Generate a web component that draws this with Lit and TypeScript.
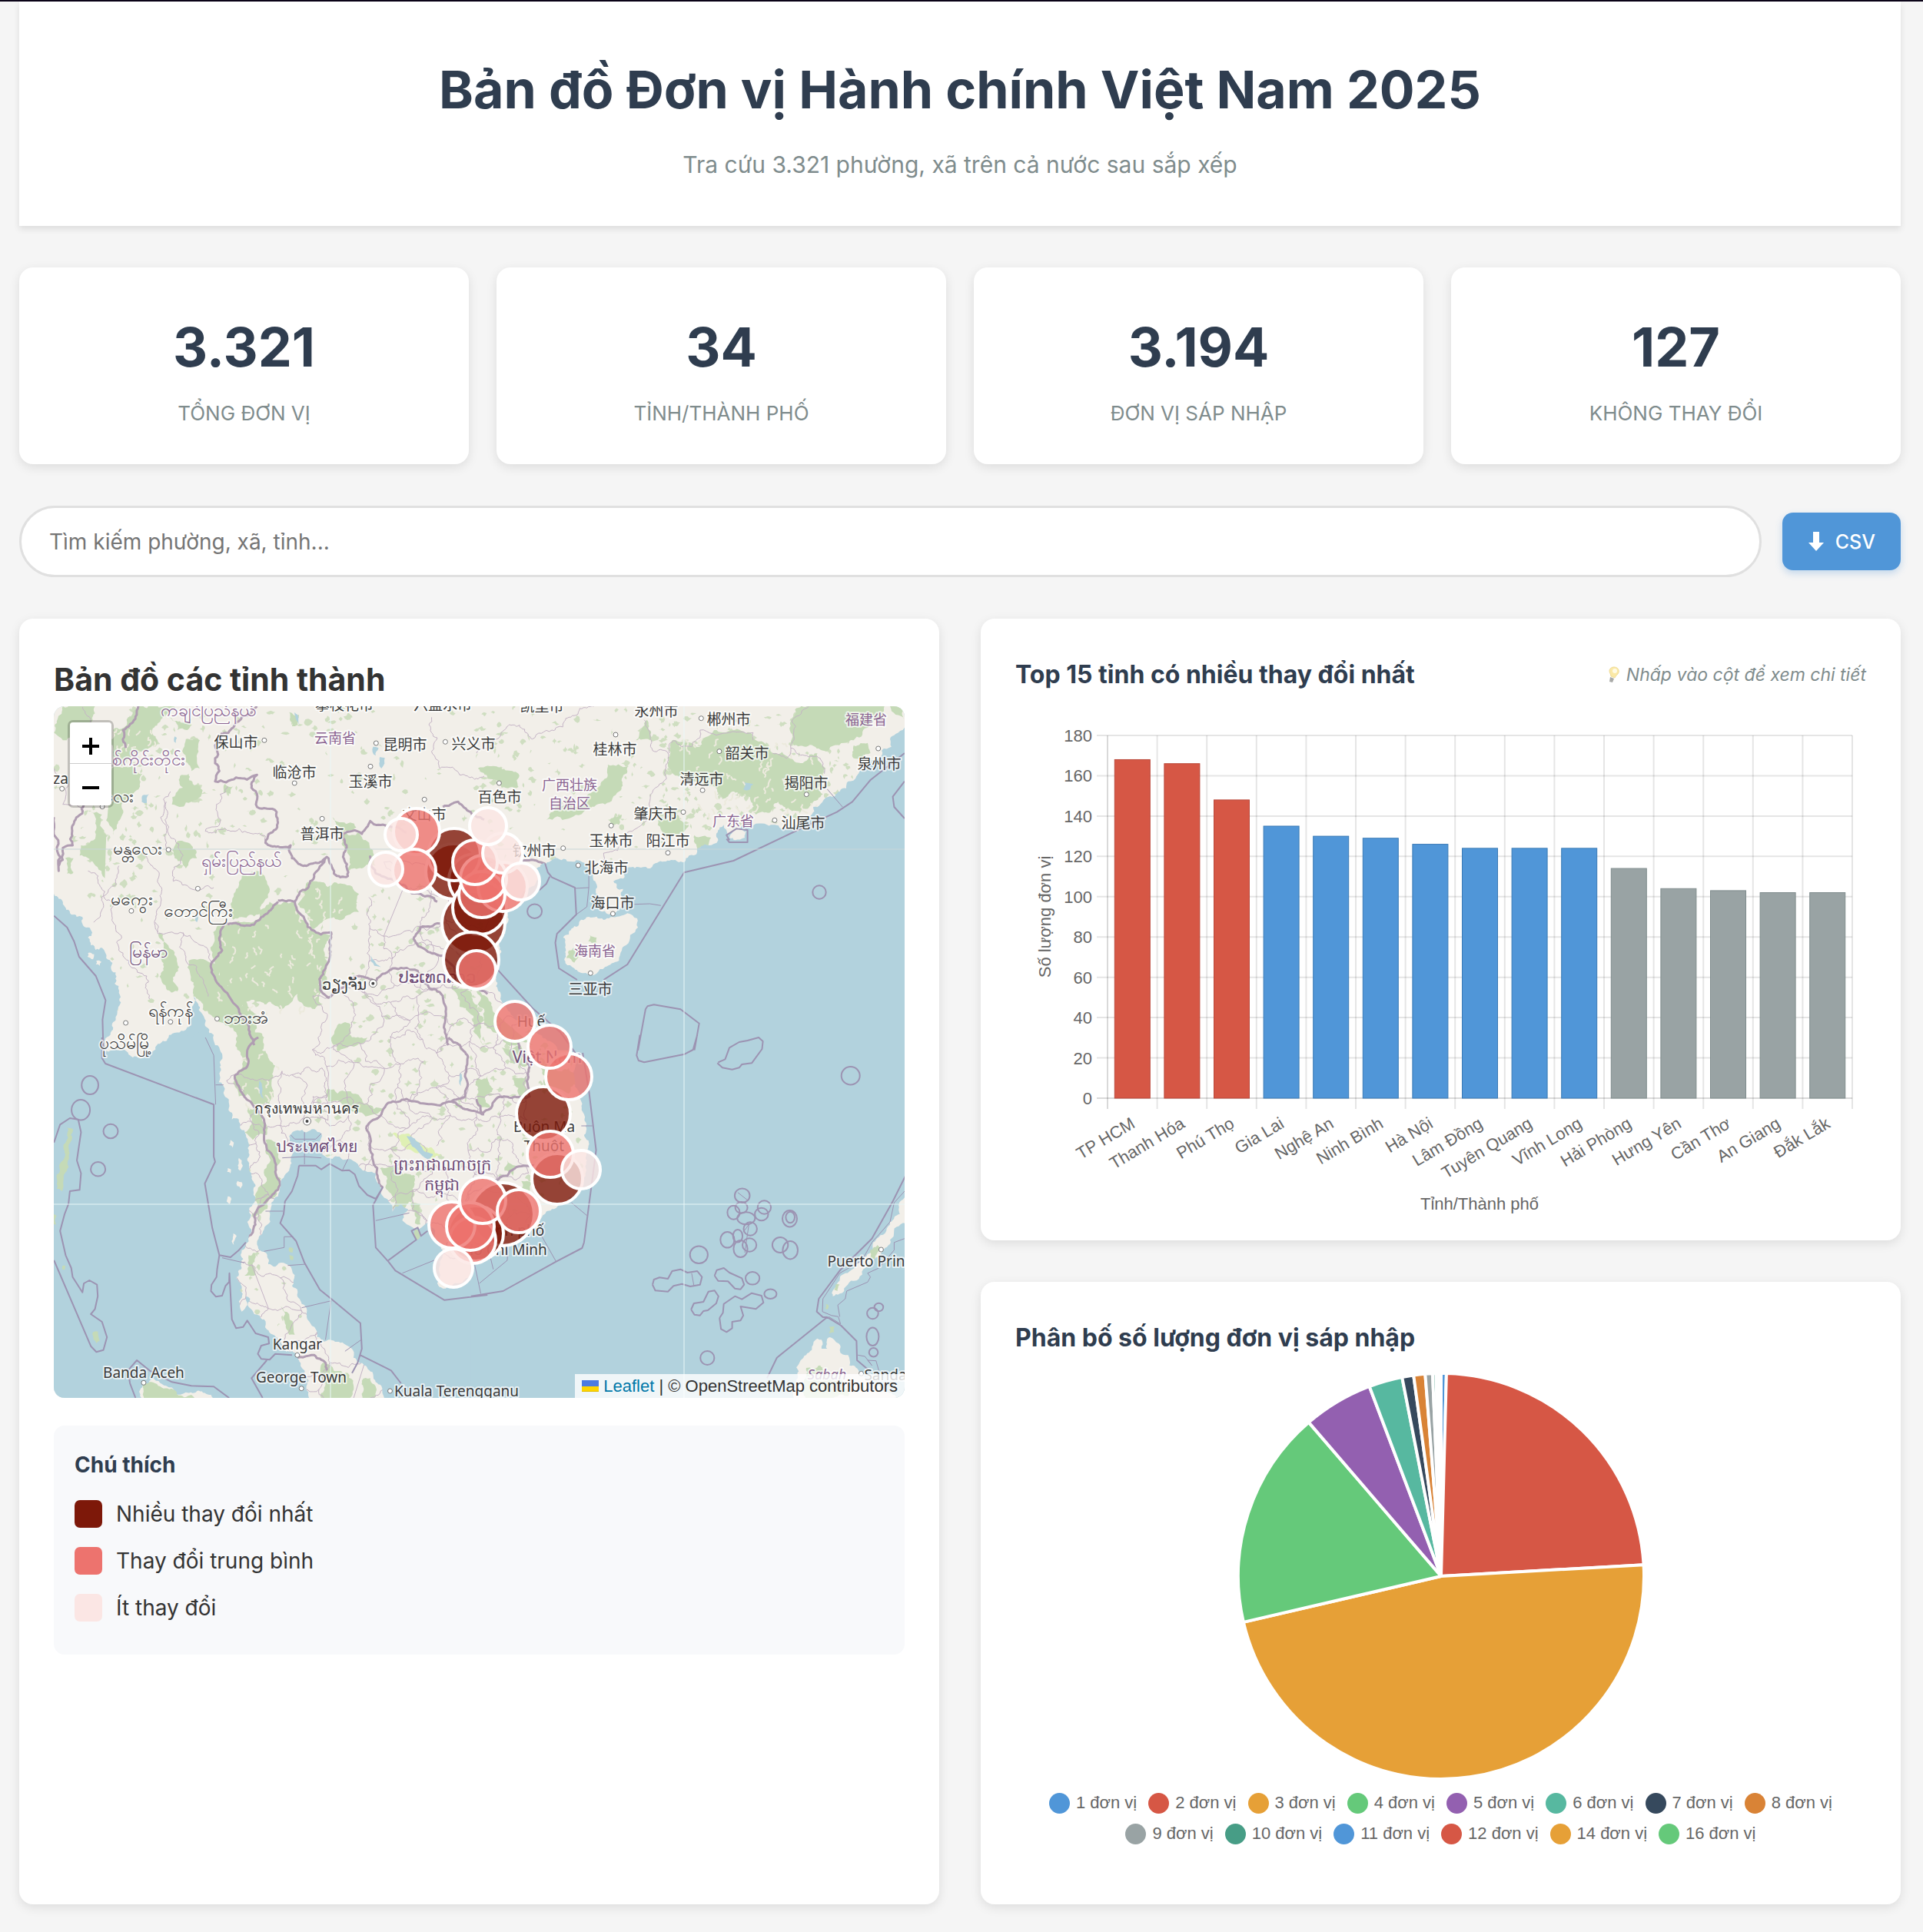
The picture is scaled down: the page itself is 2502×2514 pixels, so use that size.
import { LitElement, html, svg, css } from "lit";
import { customElement } from "lit/decorators.js";

type Pt = [number, number];

/* ---------- data ---------- */

const STATS = [
  ["3.321", "Tổng đơn vị"],
  ["34", "Tỉnh/Thành phố"],
  ["3.194", "Đơn vị sáp nhập"],
  ["127", "Không thay đổi"],
];

const RED = "#d65745";
const BLUE = "#5096d8";
const GREY = "#99a3a4";

const BARS: [string, number][] = [
  ["TP HCM", 168], ["Thanh Hóa", 166], ["Phú Thọ", 148], ["Gia Lai", 135],
  ["Nghệ An", 130], ["Ninh Bình", 129], ["Hà Nội", 126], ["Lâm Đồng", 124],
  ["Tuyên Quang", 124], ["Vĩnh Long", 124], ["Hải Phòng", 114],
  ["Hưng Yên", 104], ["Cần Thơ", 103], ["An Giang", 102], ["Đắk Lắk", 102],
];

/* label, colour, end angle in degrees clockwise from the top */
const SLICES: [string, string, number][] = [
  ["1 đơn vị", BLUE, 1.5],
  ["2 đơn vị", RED, 86.8],
  ["3 đơn vị", "#e6a037", 256.9],
  ["4 đơn vị", "#65c97a", 319.3],
  ["5 đơn vị", "#9360b0", 339.3],
  ["6 đơn vị", "#57b8a0", 348.9],
  ["7 đơn vị", "#36495d", 352.2],
  ["8 đơn vị", "#d98336", 355.5],
  ["9 đơn vị", GREY, 357.6],
  ["10 đơn vị", "#479d86", 358.6],
  ["11 đơn vị", BLUE, 359],
  ["12 đơn vị", RED, 359.4],
  ["14 đơn vị", "#e6a037", 359.7],
  ["16 đơn vị", "#65c97a", 360],
];

const HIGH = "#7d1809";
const MID = "#ed736e";
const LOW = "#fbe6e4";

/* x, y, radius, level */
const MARKERS: [number, number, number, string][] = [
  [520, 215, 36, HIGH], [548, 226, 34, HIGH], [521, 193, 34, HIGH],
  [546, 282, 41, HIGH], [554, 262, 35, HIGH], [543, 330, 36, HIGH],
  [550, 343, 25, MID],
  [472, 163, 30, MID], [452, 167, 21, LOW], [469, 214, 28, MID], [432, 212, 22, LOW],
  [584, 235, 32, MID], [557, 245, 30, MID], [559, 224, 30, MID], [548, 203, 29, MID],
  [584, 191, 26, LOW], [565, 156, 24, LOW], [608, 228, 24, LOW],
  [600, 410, 26, MID], [655, 615, 33, HIGH], [637, 530, 35, HIGH],
  [670, 482, 30, MID], [645, 443, 28, MID], [646, 583, 30, MID], [686, 603, 25, LOW],
  [584, 661, 41, HIGH], [549, 686, 36, HIGH], [545, 695, 30, MID],
  [518, 675, 30, MID], [542, 677, 31, MID], [558, 643, 30, MID],
  [605, 657, 28, MID], [520, 731, 25, LOW],
];

/* ---------- map geometry ---------- */

/* The base map is digitised in four sheets; each has its own origin. */
type Sheet = "nw" | "ne" | "sw" | "se";
const ORIGIN: Record<Sheet, Pt> = { nw: [-10, -19], ne: [550, -19], sw: [-10, 431], se: [550, 431] };
const SX = 1 / 2.751;
const SY = 1 / 3;
const at = (s: Sheet, x: number, y: number): Pt => [ORIGIN[s][0] + x * SX, ORIGIN[s][1] + y * SY];

const parse = (s: Sheet, text: string): Pt[] =>
  text.trim().split(/\s+/).map((p) => {
    const [x, y] = p.split(",").map(Number);
    return at(s, x, y);
  });

let seed = 7;
const rnd = () => {
  seed = (seed * 16807) % 2147483647;
  return seed / 2147483647 - 0.5;
};

/* Midpoint displacement, so borders and coasts look surveyed.
   Segments longer than the limit are sheet edges and stay straight. */
const rough = (pts: Pt[], amount: number, limit = 60): Pt[] => {
  let out = pts;
  for (let pass = 0; pass < 4; pass++) {
    const next: Pt[] = [out[0]];
    for (let i = 1; i < out.length; i++) {
      const [ax, ay] = out[i - 1];
      const [bx, by] = out[i];
      const len = Math.hypot(bx - ax, by - ay);
      if (len > 4 && len < limit) {
        const k = rnd() * amount * len;
        next.push([(ax + bx) / 2 - ((by - ay) / len) * k, (ay + by) / 2 + ((bx - ax) / len) * k]);
      }
      next.push(out[i]);
    }
    out = next;
  }
  return out;
};

const path = (pts: Pt[], close = false) =>
  "M" + pts.map(([x, y]) => `${x.toFixed(1)} ${y.toFixed(1)}`).join("L") + (close ? "Z" : "");

const area = (s: Sheet, text: string, amount = 0.45) => {
  const p = parse(s, text);
  return path(rough([...p, p[0]], amount), true);
};
const line = (s: Sheet, text: string, amount = 0) =>
  path(amount ? rough(parse(s, text), amount, 90) : parse(s, text));

const FOREST = [
  area("nw", "60,57 175,57 175,85 150,130 110,180 60,190 28,160 40,110"),
  area("nw", "330,57 450,57 410,110 380,150 400,200 330,230 270,290 240,250 240,150 290,120"),
  area("nw", "440,95 520,105 505,150 470,150"),
  area("nw", "500,185 550,190 540,260 550,300 520,310 500,260"),
  area("nw", "485,325 510,320 530,365 560,385 520,430 450,440 470,390 490,375"),
  area("nw", "160,470 200,480 215,560 210,740 170,670 120,640 125,600 155,590"),
  area("nw", "235,300 310,290 345,320 310,400 270,450 240,560 220,480"),
  area("nw", "68,650 98,650 98,705 75,710"),
  area("nw", "465,590 520,600 540,650 500,690 460,650"),
  area("nw", "700,720 750,700 790,740 780,820 760,870 700,880 670,890 660,850 680,770"),
  area("nw", "930,750 960,740 1060,750 1120,790 1120,860 1060,890 1000,890 950,930 900,830"),
  area("nw", "800,820 890,820 930,900 950,930 1020,950 1010,1060 980,1180 990,1220 930,1230 900,1180 840,1240 760,1210 700,1230 650,1160 600,1080 610,920 700,900 765,885"),
  area("nw", "1070,550 1120,550 1170,620 1180,680 1130,690 1080,700 1060,600"),
  area("nw", "590,1060 650,1150 740,1250 760,1380 700,1380 680,1330 560,1240 530,1150 510,1050"),
  area("nw", "405,940 440,1000 470,1060 470,1170 430,1160 420,1060"),
  area("nw", "1025,490 1060,510 1110,530 1060,550"),
  area("nw", "640,360 670,370 660,400 635,395"),
  area("nw", "870,80 905,90 900,130 880,135"),
  area("nw", "1040,1310 1090,1300 1100,1380 1030,1380"),
  area("nw", "1450,1150 1500,1160 1568,1240 1568,1380 1530,1300 1480,1230"),
  area("ne", "5,300 60,290 150,320 150,372 90,375 40,340"),
  area("ne", "470,285 545,290 520,340 510,390 460,440 400,460 250,500 260,480 380,440 440,370"),
  area("ne", "610,110 625,160 620,190 570,190 590,150"),
  area("ne", "700,190 800,215 850,150 980,160 1000,190 1060,240 1120,260 1220,240 1250,300 1230,340 1240,400 1200,440 1120,460 1080,430 1000,480 960,400 880,420 780,350 690,300"),
  area("ne", "1140,70 1190,57 1460,57 1440,110 1350,190 1280,210 1180,215 1125,200"),
  area("ne", "1350,210 1400,200 1410,240 1350,260"),
  area("ne", "1480,57 1532,57 1532,110 1500,90"),
  area("ne", "650,500 720,480 760,520 720,560 680,570"),
  area("ne", "470,500 520,480 510,520 480,530"),
  area("ne", "780,560 840,570 830,600 790,620"),
  area("ne", "60,1250 0,1170 0,1240 60,1330 130,1380 200,1380"),
  area("sw", "680,0 780,0 800,90 820,110 810,200 800,260 740,260 720,220 690,230 670,180 700,120"),
  area("sw", "715,255 770,290 790,380 740,400 710,370"),
  area("sw", "785,400 825,410 840,480 840,580 800,630 760,690 735,700 750,610 790,560"),
  area("sw", "725,850 745,840 745,930 710,930"),
  area("sw", "1040,0 1150,0 1120,25 1040,50"),
  area("sw", "1010,200 1080,210 1140,260 1210,280 1180,300 1110,290 1060,260 1010,250"),
  area("sw", "1195,510 1250,500 1320,540 1310,640 1240,670 1215,580"),
  area("sw", "1310,640 1340,650 1340,730 1320,725"),
  area("sw", "840,1050 870,1080 890,1160 870,1160 850,1100"),
  area("sw", "990,1270 1080,1310 1080,1440 970,1440 1000,1350"),
  area("sw", "1130,1340 1160,1330 1190,1440 1120,1440"),
  area("se", "0,160 40,150 60,200 30,240 60,280 0,260"),
  area("se", "130,160 180,150 190,220 150,240"),
  area("se", "110,480 140,500 130,540 100,520"),
  area("se", "160,560 200,570 190,600 150,610"),
  area("se", "230,100 330,120 360,180 330,220 250,200"),
  area("se", "90,40 150,30 180,110 120,100"),
];

const SEAS = [
  area("nw", "-60,740 28,790 60,830 90,870 130,880 150,920 165,940 150,960 160,990 200,1000 215,1040 235,1090 245,1140 262,1200 255,1250 240,1290 225,1345 215,1400 -60,1400", 0.6),
  area("nw", "528,1185 545,1220 560,1260 575,1310 605,1390 400,1390 440,1350 500,1320 515,1280 522,1230", 0.5),
  area("ne", "1700,100 1532,140 1500,165 1480,185 1485,215 1450,230 1440,260 1400,290 1360,330 1330,350 1300,390 1260,410 1230,440 1205,450 1200,480 1150,520 1090,535 1040,520 1000,515 985,530 960,520 940,545 900,560 885,520 870,530 865,580 830,600 790,625 760,640 745,665 690,660 640,670 580,685 530,700 525,730 490,740 525,770 520,800 530,830 505,850 440,855 435,800 425,740 430,690 400,690 370,660 320,655 290,650 260,665 215,690 230,720 200,760 150,830 110,860 100,910 85,970 60,1050 60,1100 70,1150 85,1200 120,1250 180,1290 230,1340 290,1400 1700,1400", 0.5),
  area("sw", "-60,-10 215,-10 210,55 260,50 300,70 345,80 375,60 400,25 440,-10 600,-10 605,30 625,90 620,140 640,200 655,260 665,320 690,320 715,380 725,450 720,480 735,530 750,580 740,650 720,720 725,780 700,830 700,900 680,940 690,1030 700,1070 715,1010 730,1020 745,1080 780,1100 790,1140 830,1180 890,1230 905,1260 925,1300 940,1340 970,1450 -60,1450", 0.5),
  area("sw", "870,385 900,362 960,358 985,375 975,410 985,440 1000,465 1050,465 1090,475 1120,505 1150,525 1180,530 1200,590 1225,640 1240,680 1270,650 1295,670 1275,715 1310,740 1370,720 1390,780 1420,830 1410,890 1400,960 1430,980 1470,960 1530,900 1640,860 1640,1500 1260,1500 1200,1360 1140,1280 1100,1250 1060,1190 1010,1180 970,1170 935,1100 915,1040 900,990 880,970 870,890 850,880 820,895 795,885 785,840 765,830 755,800 780,750 800,680 830,620 840,580 870,520 880,460 875,420", 0.4),
  area("se", "290,-20 330,60 350,150 370,230 380,290 385,380 400,430 395,480 390,540 370,600 320,640 270,670 235,700 225,740 190,760 130,800 90,830 50,850 -20,880 -20,1500 1700,1500 1700,-20", 0.4),
];

const LAKES = [
  area("sw", "1290,385 1320,395 1350,440 1385,455 1370,475 1340,455 1310,425", 0.3),
  area("sw", "765,160 775,200 778,240 766,220", 0.3),
  area("sw", "1480,130 1490,160 1485,190 1478,170", 0.3),
  area("nw", "345,405 368,400 360,435 342,430", 0.3),
  area("nw", "1170,215 1190,220 1180,250 1168,235", 0.3),
  area("nw", "890,80 900,90 908,130 895,110", 0.3),
  area("nw", "1195,255 1212,258 1200,300 1192,280", 0.3),
  area("nw", "460,175 468,180 464,200 458,195", 0.3),
  area("nw", "1160,1030 1180,1060 1200,1075 1175,1070", 0.3),
  area("nw", "535,870 545,880 540,900 533,890", 0.3),
  area("ne", "960,355 990,360 980,380 955,380", 0.4),
];

const ISLANDS = [
  area("ne", "540,865 575,885 578,920 550,950 535,990 520,1010 510,1050 460,1075 430,1100 390,1098 350,1080 318,1060 320,1010 310,960 340,925 375,890 430,878 480,880"),
  area("ne", "905,570 935,540 968,545 960,570 925,580"),
  area("se", "1580,590 1532,625 1515,690 1480,720 1440,780 1420,830 1370,880 1320,920 1290,970 1275,1010 1300,1000 1350,950 1400,890 1450,840 1480,790 1580,700"),
  area("se", "1150,1320 1160,1260 1200,1220 1220,1175 1235,1180 1235,1215 1255,1215 1265,1170 1280,1180 1300,1220 1330,1240 1335,1280 1370,1310 1430,1350 1500,1400 1510,1450 1140,1450"),
  area("sw", "345,1450 345,1360 370,1340 430,1360 500,1385 590,1395 630,1450"),
  area("sw", "660,400 672,410 668,430 655,420"),
  area("sw", "650,510 662,515 660,530 648,525"),
  area("sw", "690,470 700,480 696,520 686,500"),
  area("sw", "685,560 700,565 696,590 684,580"),
  area("sw", "670,765 682,775 672,810 664,795"),
  area("nw", "150,1020 172,1025 168,1045 148,1035"),
  area("nw", "180,1050 198,1055 192,1070 178,1065"),
  area("sw", "650,620 662,626 656,650 646,640"),
  area("sw", "1405,960 1425,965 1420,978 1408,974"),
];

const ISLAND_FOREST = [
  area("ne", "330,1010 350,1000 365,1035 350,1058 322,1040"),
  area("ne", "405,950 430,960 425,985 400,975"),
  area("sw", "75,350 97,360 92,400 80,420 82,470 75,520 62,560 58,600 38,590 50,520 60,480 62,430"),
  area("sw", "168,1150 186,1148 192,1185 180,1195 170,1180"),
  area("sw", "28,690 38,695 36,730 28,730"),
  area("sw", "58,892 70,892 68,906 58,906"),
  area("sw", "345,1360 370,1345 420,1370 520,1395 560,1450 350,1450"),
  area("sw", "1320,750 1335,755 1330,790 1322,785"),
  area("sw", "870,820 885,825 882,840 872,838"),
  area("sw", "870,850 885,855 882,870 872,866"),
  area("se", "1410,830 1435,810 1450,825 1425,865 1408,860"),
  area("se", "1262,1130 1282,1128 1280,1150 1262,1155"),
  area("se", "1250,1040 1260,1045 1256,1062 1248,1058"),
  area("se", "1285,965 1300,965 1292,990 1280,985"),
  area("se", "1180,1290 1230,1280 1260,1310 1300,1300 1330,1400 1180,1420"),
];

const BORDERS = [
  line("nw", "755,57 700,100 670,140 605,210 605,280 620,310 605,350 755,325 735,375 755,450 825,470 785,590 875,600 880,650 920,680 1005,645 1030,710 1080,720 1075,600 1060,555 1130,555 1160,505 1220,530 1290,550", 0.35),
  line("nw", "830,815 890,820 940,755 1000,650", 0.35),
  line("nw", "830,820 765,890 665,905 640,905 630,1010 590,1065 640,1170 690,1240 725,1320 745,1380", 0.35),
  line("nw", "890,820 930,900 950,930 1020,940 1015,1040 1000,1080 985,1170 1010,1195 1070,1150 1120,1110 1180,1130 1250,1080 1330,1090 1400,1170 1425,1300 1440,1380", 0.35),
  line("nw", "1580,1180 1420,1030 1315,965 1340,920 1410,905", 0.3),
  line("nw", "1160,640 1200,720 1260,750 1300,780 1340,790 1400,820", 0.4),
  line("nw", "28,490 45,700 60,610 95,600 105,500 135,440", 0.35),
  line("nw", "330,57 310,120 275,150 285,220", 0.35),
  line("nw", "1420,450 1475,430 1520,470 1568,500", 0.35),
  line("ne", "165,660 215,660 245,672", 0.2),
  line("sw", "760,0 720,50 715,120 675,150 690,190 750,275 780,320 780,400 815,470 838,575 745,700 740,760 715,800", 0.25),
  line("sw", "1145,350 1200,300 1225,255 1290,240 1450,250 1500,230 1510,75 1440,0", 0.25),
  line("sw", "1145,350 1160,440 1185,510 1205,585", 0.3),
  line("sw", "1450,250 1568,300", 0.3),
  line("sw", "880,1240 960,1240 1000,1270 1005,1300", 0.35),
  line("se", "0,240 20,300 70,240 100,230 190,230 190,110 150,20", 0.3),
  line("se", "60,560 110,540 170,500 210,500", 0.3),
];

const PROVINCES = [
  line("nw", "430,430 425,500 440,560 490,640 455,740 520,770 600,765", 0.5),
  line("nw", "445,390 420,420 425,560 430,620", 0.4),
  line("nw", "650,370 610,440 620,520 570,545 660,545 720,550 790,590", 0.5),
  line("nw", "390,900 400,945 480,940 540,980 600,1060", 0.4),
  line("nw", "490,940 500,1050 560,1120 580,1190", 0.4),
  line("nw", "150,700 210,780 240,900 260,1010 300,1070 360,1110 370,1200", 0.5),
  line("nw", "340,630 400,700 410,830 400,940", 0.4),
  line("nw", "260,680 200,800 170,900", 0.4),
  line("nw", "1380,100 1370,130 1400,180 1390,250 1410,300 1460,300 1480,325 1568,330", 0.5),
  line("ne", "0,240 60,190 130,130 200,185 270,150 330,100 420,57", 0.5),
  line("ne", "600,110 630,230 685,240 680,340 650,370 620,450 600,510 540,550 505,620 455,630 455,660", 0.4),
  line("ne", "690,240 705,190 770,215 800,180 800,150 990,160 990,190", 0.4),
  line("ne", "1190,57 1130,110 1125,220 1230,260 1245,320", 0.4),
  line("ne", "1060,240 1110,260 1125,220", 0.4),
  line("nw", "130,60 180,150 170,240 240,290", 0.4),
  line("nw", "30,300 80,360 60,440 130,470", 0.4),
];

/* A jittered lattice stands for the small provinces of the peninsula. */
const lattice = (x0: number, y0: number, x1: number, y1: number, step: number) => {
  const cols = Math.round((x1 - x0) / step);
  const rows = Math.round((y1 - y0) / step);
  const node: Pt[][] = [];
  for (let r = 0; r <= rows; r++) {
    node.push([]);
    for (let c = 0; c <= cols; c++) {
      node[r].push([x0 + c * step + rnd() * step * 0.7 + (r % 2) * step * 0.4, y0 + r * step + rnd() * step * 0.7]);
    }
  }
  const out: string[] = [];
  for (let r = 0; r <= rows; r++) {
    for (let c = 0; c <= cols; c++) {
      if (c < cols && rnd() < 0.36) out.push(path(rough([node[r][c], node[r][c + 1]], 0.5)));
      if (r < rows && rnd() < 0.36) out.push(path(rough([node[r][c], node[r + 1][c]], 0.5)));
    }
  }
  return out.join("");
};
const LATTICE =
  lattice(340, 375, 620, 690, 33) + lattice(225, 480, 340, 690, 32) +
  lattice(400, 210, 560, 370, 38) + lattice(225, 740, 420, 900, 40);

/* Small patches of woodland across the mainland. */
const patches = (() => {
  const out: string[] = [];
  const zones: [number, number, number, number, number][] = [
    [0, 0, 560, 180, 150], [560, 0, 800, 200, 110], [790, 10, 1040, 160, 240],
    [60, 120, 360, 400, 110], [340, 420, 640, 660, 120], [210, 560, 330, 860, 60], [380, 230, 560, 420, 90],
    [40, 60, 120, 260, 60], [560, 420, 690, 640, 60],
  ];
  for (const [x0, y0, x1, y1, n] of zones) {
    for (let i = 0; i < n; i++) {
      const x = x0 + (rnd() + 0.5) * (x1 - x0);
      const y = y0 + (rnd() + 0.5) * (y1 - y0);
      const a = 1 + (rnd() + 0.5) * 5;
      const b = 1 + (rnd() + 0.5) * 4;
      const p: Pt[] = [[x - a, y], [x, y - b], [x + a, y + rnd() * 3], [x + rnd() * 3, y + b]];
      out.push(path(rough([...p, p[0]], 0.6), true));
    }
  }
  return out.join("");
})();

/* River valleys cut through the forest. */
const valleys = (() => {
  const out: string[] = [];
  const zones: [number, number, number, number, number][] = [
    [210, 285, 360, 400, 46], [80, 10, 140, 80, 16], [810, 40, 1000, 140, 50], [240, 440, 290, 520, 12], [305, 235, 390, 280, 14],
  ];
  for (const [x0, y0, x1, y1, n] of zones) {
    for (let i = 0; i < n; i++) {
      const x = x0 + (rnd() + 0.5) * (x1 - x0);
      const y = y0 + (rnd() + 0.5) * (y1 - y0);
      out.push(path(rough([[x, y], [x + rnd() * 14, y + 8 + rnd() * 8]], 0.7)));
    }
  }
  return out.join("");
})();

const SEA_LINES = [
  line("nw", "28,875 75,920 100,975 118,1035 178,1110 213,1205 202,1280 205,1400"),
  line("sw", "200,0 200,80 212,102 600,262 600,465 605,485 568,570 595,745 620,850 660,858 690,830 715,800"),
  line("sw", "620,850 612,905 610,935 592,965 590,990 608,1012 630,1008 642,970 655,955 656,920 660,1000 665,1100 680,1135 705,1130 720,1105 750,1155 795,1170 798,1195 770,1203 758,1235 770,1255 800,1258 820,1235 880,1240"),
  line("sw", "790,1260 735,1330 775,1407"),
  line("sw", "320,1407 300,1350 293,1300 325,1260 370,1300 450,1345 520,1360 600,1363 655,1407"),
  line("sw", "905,500 965,500 985,515 1015,493 1060,520 1085,518 1105,535 1120,580 1150,615 1180,630 1205,585 1170,655 1180,820 1225,875 1250,910 1425,1025 1580,1005"),
  line("sw", "905,500 900,540 880,600 855,640 850,690 838,725 895,795 925,880 980,985 1020,1020 1125,1115 1130,1215 1115,1270 1095,1310"),
  line("sw", "1125,1240 1235,1300 1270,1350"),
  line("sw", "1225,870 1325,790 1308,755 1330,742 1342,775 1365,755"),
  line("sw", "28,410 50,340 85,315 115,320 125,370 110,480 125,530 120,595 85,600 80,650 66,690 50,755 70,850 90,900 95,935 130,995 135,960 155,948 182,965 185,1010 175,1060 160,1080 200,1110 218,1170 205,1220 180,1228 160,1205 28,870"),
  line("ne", "1532,240 1410,345 1345,430 1290,470 1150,540 920,660 743,706 540,1065 455,1125"),
  line("ne", "360,1125 295,1080 282,980 288,945 357,870 352,765 270,725 255,705 245,670"),
  line("ne", "262,722 250,750 225,775"),
  line("ne", "75,1085 200,1235 300,1330 380,1450"),
  line("ne", "1532,350 1490,410 1495,450 1532,495"),
  line("ne", "578,1400 605,1240 612,1228 635,1222 730,1240 797,1295 780,1400"),
  line("ne", "905,580 895,560 930,535 970,540 970,588 905,588 895,575"),
  line("se", "585,-10 573,70 580,90 600,97 745,65 775,48 790,-10"),
  line("se", "865,97 890,85 905,40 940,18 970,12 1010,0 1025,15 1022,45 985,100 950,105 940,118 915,125 880,118 862,100"),
  line("se", "380,60 403,215 428,440 385,800 378,822 285,875 95,990 -20,1010"),
  line("se", "630,965 635,945 655,937 685,942 700,912 730,905 755,918 790,912 807,935 800,965 765,972 735,962 705,970 685,992 640,988 630,965"),
  line("se", "852,930 860,908 885,900 905,918 950,940 958,965 945,983 925,980 900,952 865,950 852,930"),
  line("se", "768,1062 778,1038 812,1032 830,992 852,988 866,1010 858,1038 828,1065 812,1068 800,1085 780,1082 768,1062"),
  line("se", "870,1095 882,1075 885,1040 925,1010 950,1022 985,998 1020,1008 1027,1035 1000,1060 945,1050 955,1085 945,1105 915,1110 915,1135 895,1150 875,1138 870,1095"),
  line("se", "1540,530 1490,640 1415,785 1300,910 1225,1020 1218,1070 1240,1092 1255,1092 1075,1250 1040,1330"),
  line("se", "1255,1092 1305,1125 1360,1185 1362,1260 1400,1295"),
];

const THIN_SEA_LINES = [
  line("ne", "402,690 402,765 352,768"),
  line("ne", "402,765 395,840 357,870"),
  line("ne", "565,830 620,828 660,835"),
  line("ne", "1255,380 1310,450"),
  line("sw", "570,0 600,70 607,262"),
  line("sw", "607,185 635,185"),
  line("sw", "845,470 925,465 985,470"),
  line("sw", "925,370 925,495"),
  line("sw", "875,380 890,397 965,397 985,375"),
  line("sw", "1080,475 1060,520"),
  line("sw", "785,678 848,678"),
  line("sw", "780,835 852,820 852,778 885,778"),
  line("sw", "865,890 930,885"),
  line("sw", "915,1055 1020,1028 1000,1180"),
  line("sw", "1070,1225 1128,1180"),
  line("sw", "1180,715 1300,685"),
  line("sw", "1275,920 1400,865"),
  line("sw", "630,860 710,880"),
  line("se", "375,345 415,345"),
  line("se", "340,645 395,695"),
  line("se", "225,760 285,875"),
  line("se", "10,960 110,870 112,830"),
  line("se", "-10,870 15,1000"),
  line("se", "50,860 60,905"),
  line("se", "1532,600 1495,645 1480,720 1440,770 1415,800 1380,870 1300,920 1240,1020 1238,1070 1270,1085 1295,1090 1303,1118 1260,1090"),
  line("se", "1300,1090 1293,1045 1320,1020 1325,990 1400,955 1410,935 1400,920 1440,900 1495,830 1495,800 1532,785"),
  line("se", "935,605 970,635"),
  line("se", "770,920 778,968"),
  line("se", "955,760 975,730 960,840"),
  line("se", "1365,1240 1390,1245 1415,1280 1400,1260 1430,1262 1440,1300"),
];

const RINGS: [Sheet, number, number, number, number][] = [
  ["sw", 157, 186, 30, 36], ["sw", 124, 283, 33, 40], ["sw", 231, 366, 26, 28], ["sw", 186, 514, 26, 28],
  ["ne", 1227, 783, 24, 26], ["ne", 208, 857, 26, 28],
  ["se", 1339, 149, 33, 35], ["se", 951, 617, 27, 28], ["se", 920, 683, 22, 27], ["se", 948, 664, 22, 22],
  ["se", 1030, 663, 24, 26], ["se", 1020, 690, 24, 25], ["se", 965, 706, 32, 24], ["se", 1121, 707, 26, 32],
  ["se", 1123, 702, 16, 22], ["se", 980, 747, 24, 26], ["se", 898, 790, 25, 31], ["se", 935, 775, 17, 25],
  ["se", 945, 825, 25, 33], ["se", 977, 810, 25, 26], ["se", 1087, 810, 28, 30], ["se", 1123, 830, 27, 35],
  ["se", 796, 848, 32, 34], ["se", 988, 940, 25, 25], ["se", 1052, 1001, 22, 19], ["se", 826, 1251, 25, 27],
  ["se", 1440, 1053, 16, 16], ["se", 1418, 1077, 20, 22], ["se", 1418, 1168, 22, 35], ["se", 1421, 1229, 16, 17],
];

const DOTS: [Sheet, number, number][] = [
  ["nw", 781, 190], ["nw", 1181, 201], ["nw", 1429, 196], ["nw", 889, 357], ["nw", 1161, 292],
  ["nw", 1354, 421], ["nw", 988, 496], ["nw", 57, 379], ["nw", 201, 449], ["nw", 438, 617],
  ["nw", 305, 856], ["nw", 543, 769], ["nw", 285, 1293], ["nw", 445, 1289], ["nw", 612, 1277],
  ["ne", 804, 104], ["ne", 498, 168], ["ne", 869, 233], ["ne", 81, 357], ["ne", 809, 385],
  ["ne", 1181, 401], ["ne", 1438, 222], ["ne", 740, 470], ["ne", 482, 523], ["ne", 1067, 502],
  ["ne", 310, 611], ["ne", 364, 678], ["ne", 685, 629], ["ne", 488, 867], ["ne", 408, 1099],
  ["sw", 349, 1348], ["sw", 899, 1240], ["sw", 914, 1370], ["sw", 1231, 1380],
  ["se", 1448, 828], ["se", 1377, 1312],
];

/* sheet, x, y of the middle, text, kind */
const LABELS: [Sheet, number, number, string, string][] = [
  ["nw", 580, 68, "ကချင်ပြည်နယ်", "region wide"],
  ["nw", 350, 262, "စစ်ကိုင်းတိုင်း", "region wide"],
  ["nw", 700, 658, "ရှမ်းပြည်နယ်", "region wide"],
  ["nw", 1035, 180, "云南省", "region"],
  ["nw", 1068, 52, "攀枝花市", "city"],
  ["nw", 1420, 52, "六盘水市", "city"],
  ["nw", 680, 198, "保山市", "city"],
  ["nw", 1284, 208, "昆明市", "city"],
  ["nw", 1530, 204, "兴义市", "city"],
  ["nw", 888, 314, "临沧市", "city"],
  ["nw", 1162, 352, "玉溪市", "city"],
  ["nw", 1354, 480, "文山市", "city"],
  ["nw", 987, 556, "普洱市", "city"],
  ["nw", 52, 338, "za", "city"],
  ["nw", 258, 404, "လေး", "city wide"],
  ["nw", 326, 608, "မန္တလေး", "city wide"],
  ["nw", 306, 808, "မကွေး", "city wide"],
  ["nw", 544, 852, "တောင်ကြီး", "city wide"],
  ["nw", 366, 1012, "မြန်မာ", "country wide"],
  ["nw", 445, 1242, "ရန်ကုန်", "city wide"],
  ["nw", 712, 1268, "ဘားအံ", "city wide"],
  ["nw", 284, 1368, "ပုသိမ်မြို့", "city wide"],
  ["nw", 1068, 1144, "ວຽງຈັນ", "city"],
  ["nw", 1400, 1112, "ປະເທດລາວ", "country"],
  ["ne", 235, 56, "凯里市", "city"],
  ["ne", 644, 74, "永州市", "city"],
  ["ne", 902, 108, "郴州市", "city"],
  ["ne", 1396, 108, "福建省", "region"],
  ["ne", 496, 226, "桂林市", "city"],
  ["ne", 968, 240, "韶关市", "city"],
  ["ne", 1441, 282, "泉州市", "city"],
  ["ne", 807, 342, "清远市", "city"],
  ["ne", 1180, 358, "揭阳市", "city"],
  ["ne", 332, 362, "广西壮族", "region"],
  ["ne", 332, 434, "自治区", "region"],
  ["ne", 82, 412, "百色市", "city"],
  ["ne", 640, 477, "肇庆市", "city"],
  ["ne", 920, 503, "广东省", "region"],
  ["ne", 1170, 512, "汕尾市", "city"],
  ["ne", 481, 583, "玉林市", "city"],
  ["ne", 686, 583, "阳江市", "city"],
  ["ne", 206, 622, "钦州市", "city"],
  ["ne", 466, 686, "北海市", "city"],
  ["ne", 486, 826, "海口市", "city"],
  ["ne", 425, 1010, "海南省", "region"],
  ["ne", 407, 1160, "三亚市", "city"],
  ["ne", 194, 1288, "Huế", "city"],
  ["sw", 932, 276, "กรุงเทพมหานคร", "city"],
  ["sw", 968, 424, "ประเทศไทย", "country"],
  ["sw", 1416, 496, "ព្រះរាជាណាចក្រ", "country"],
  ["sw", 1416, 574, "កម្ពុជា", "country"],
  ["sw", 899, 1198, "Kangar", "city"],
  ["sw", 349, 1308, "Banda Aceh", "city"],
  ["sw", 914, 1326, "George Town", "city"],
  ["sw", 1470, 1380, "Kuala Terengganu", "city"],
  ["se", 252, 76, "Việt Nam", "country"],
  ["se", 243, 347, "Buôn Ma", "city"],
  ["se", 243, 422, "Thuột", "city"],
  ["se", 110, 753, "Thành phố", "city"],
  ["se", 102, 827, "Hồ Chí Minh", "city"],
  ["se", 1396, 874, "Puerto Prin", "city"],
  ["se", 1254, 1314, "Sabah", "region italic"],
  ["se", 1464, 1316, "Sanda", "city"],
];

const ellipseAt = (s: Sheet, x: number, y: number, rx: number, ry: number) => {
  const [cx, cy] = at(s, x, y);
  return svg`<ellipse cx=${cx.toFixed(1)} cy=${cy.toFixed(1)} rx=${(rx * SX).toFixed(1)} ry=${(ry * SY).toFixed(1)} />`;
};

/* ---------- base styles shared by the elements ---------- */

const shared = css`
  * { box-sizing: border-box; }
  :host {
    display: block;
    font-family: Inter, "Liberation Sans", sans-serif;
    color: #333;
  }
  h1, h2, h3, p, ul { margin: 0; padding: 0; }
`;

@customElement("province-map")
export class ProvinceMap extends LitElement {
  static styles = [shared, css`
    .frame {
      position: relative;
      height: 900px;
      border-radius: 14px;
      overflow: hidden;
      background: #b2d2dd;
    }
    .canvas { display: block; width: 100%; height: 100%; }
    .land { fill: #f2efe9; }
    .sea { fill: #b2d2dd; }
    .forest { fill: #c5dab7; }
    .wash { fill: #dff0b4; }
    .valley { fill: none; stroke: #eceadd; stroke-width: 2; }
    .border { fill: none; stroke: #b09db2; stroke-width: 3; stroke-linejoin: round; }
    .province { fill: none; stroke: #c4b3c5; stroke-width: 1; stroke-linejoin: round; }
    .sea-line { fill: none; stroke: #9c93b2; stroke-width: 2; stroke-linejoin: round; }
    .sea-line.thin { stroke-width: 1; }
    .seam { stroke: #e9f7f8; stroke-width: 1; }
    .seam.faint { stroke: #c9d6d8; }
    .dot { fill: #fff; stroke: #777; stroke-width: 1; }
    .label {
      font-family: "Noto Sans", "Noto Sans CJK SC", "DejaVu Sans", sans-serif;
      font-size: 19px;
      text-anchor: middle;
      dominant-baseline: central;
      paint-order: stroke;
      stroke: #ffffffb0;
      stroke-width: 4;
      stroke-linejoin: round;
      fill: #3a3a3a;
    }
    .label.region { fill: #8a6391; font-size: 18px; }
    .label.country { fill: #6d4b77; font-size: 21px; }
    .label.wide { font-size: 23px; }
    .label.italic { font-style: italic; }
    .marker { stroke: #fff; stroke-width: 4; fill-opacity: 0.8; }
    .zoom {
      position: absolute;
      top: 18px;
      left: 18px;
      display: flex;
      flex-direction: column;
      border: 3px solid #0003;
      border-radius: 7px;
      background-clip: padding-box;
    }
    .zoom button {
      width: 54px;
      height: 54px;
      padding: 8px 0 0;
      border: 0;
      background: #fff;
      color: #000;
      display: grid;
      place-items: center;
    }
    .zoom button:first-child { border-bottom: 1px solid #ccc; border-radius: 4px 4px 0 0; }
    .zoom button:last-child { border-radius: 0 0 4px 4px; }
    .zoom svg { width: 22px; height: 22px; }
    .credit {
      position: absolute;
      right: 0;
      bottom: 0;
      display: flex;
      align-items: center;
      gap: 6px;
      padding: 0 9px;
      background: #fffc;
      font: 22px/31px "Liberation Sans", Arial, sans-serif;
    }
    .credit a { color: #0078a8; text-decoration: none; }
    .credit svg { width: 22px; height: 15px; }
  `];

  render() {
    const seams = [
      [360, 0, 360, 900, ""], [820, 0, 820, 900, ""],
      [0, 648, 1107, 648, ""], [0, 186, 1107, 186, "faint"],
    ];
    const capital = (s: Sheet, x: number, y: number) => {
      const [cx, cy] = at(s, x, y);
      return svg`<circle class="dot" cx=${cx} cy=${cy} r="5" /><circle cx=${cx} cy=${cy} r="2" fill="#444" />`;
    };
    return html`
      <div class="frame">
        <svg class="canvas" viewBox="0 0 1107 900" preserveAspectRatio="xMidYMid slice" role="img" aria-label="Bản đồ các tỉnh thành">
          <rect class="land" x="-10" y="-10" width="1130" height="920" />
          <path class="forest" opacity="0.8" d=${patches} />
          <path class="forest" d=${FOREST.join("")} />
          <path class="wash" d=${area("sw", "1240,375 1290,375 1340,410 1415,460 1380,475 1320,450 1270,410")} />
          <path class="valley" d=${valleys} />
          <path class="province" d=${LATTICE + PROVINCES.join("")} />
          <path class="sea" d=${LAKES.join("")} />
          <path class="border" d=${BORDERS.join("")} />
          ${SEAS.map((d) => svg`<path class="sea" d=${d} />`)}
          <path class="land" d=${ISLANDS.join("")} />
          <path class="forest" d=${ISLAND_FOREST.join("")} />
          <path class="sea-line" d=${SEA_LINES.join("")} />
          <path class="sea-line thin" d=${THIN_SEA_LINES.join("")} />
          <g class="sea-line">${RINGS.map((r) => ellipseAt(...r))}</g>
          ${seams.map(([a, b, c, d, k]) => svg`<line class="seam ${k}" x1=${a} y1=${b} x2=${c} y2=${d} />`)}
          ${DOTS.map(([s, x, y]) => {
            const [cx, cy] = at(s, x, y);
            return svg`<circle class="dot" cx=${cx.toFixed(1)} cy=${cy.toFixed(1)} r="3" />`;
          })}
          ${capital("nw", 1170, 1139)}
          ${capital("sw", 934, 327)}
          ${LABELS.map(([s, x, y, text, kind]) => {
            const [cx, cy] = at(s, x, y);
            return svg`<text class="label ${kind}" x=${Math.round(cx)} y=${Math.round(cy)}>${text}</text>`;
          })}
          ${MARKERS.map(([x, y, r, fill]) => svg`<circle class="marker" cx=${x} cy=${y} r=${r} fill=${fill} />`)}
        </svg>
        <div class="zoom">
          <button type="button" aria-label="Phóng to"><svg viewBox="0 0 22 22"><path d="M11 0v22M0 11h22" stroke="#000" stroke-width="4" /></svg></button>
          <button type="button" aria-label="Thu nhỏ"><svg viewBox="0 0 22 22"><path d="M0 11h22" stroke="#000" stroke-width="4" /></svg></button>
        </div>
        <div class="credit">
          <svg viewBox="0 0 22 15"><path fill="#4c7be1" d="M0 0h22v8H0z" /><path fill="#ffd500" d="M0 8h22v6H0z" /><path fill="#e0bc00" d="M0 14h22v1H0z" /></svg>
          <span><a href="#leaflet">Leaflet</a> | © OpenStreetMap contributors</span>
        </div>
      </div>
    `;
  }
}

@customElement("bar-chart")
export class BarChart extends LitElement {
  static styles = [shared, css`
    .chart { display: block; width: 100%; height: auto; overflow: visible; }
    .grid { stroke: #0000001a; stroke-width: 2; }
    .axis { stroke: #00000026; stroke-width: 2; }
    .bar { stroke-width: 1; cursor: pointer; }
    text { font: 22px "Liberation Sans", Arial, sans-serif; fill: #666; }
    .end { text-anchor: end; }
    .mid { text-anchor: middle; }
  `];

  render() {
    const left = 120, right = 1089, top = 25, bottom = 497;
    const step = (right - left) / BARS.length;
    const y = (v: number) => bottom - (v / 180) * (bottom - top);
    const ticks = Array.from({ length: 10 }, (_, i) => i * 20);
    const tint = (i: number) => (i < 3 ? [RED, "#b9483a"] : i < 10 ? [BLUE, "#3a7ab5"] : [GREY, "#7f8c8d"]);
    return html`
      <svg class="chart" viewBox="0 0 1107 637" role="img" aria-label="Top 15 tỉnh có nhiều thay đổi nhất">
        ${ticks.map((v) => svg`
          <line class=${v ? "grid" : "axis"} x1=${left - 14} x2=${right} y1=${y(v)} y2=${y(v)} />
          <text class="end" x="100" y=${y(v) + 8}>${v}</text>`)}
        ${Array.from({ length: 16 }, (_, i) => svg`
          <line class=${i ? "grid" : "axis"} x1=${left + i * step} x2=${left + i * step} y1=${top} y2=${bottom + 14} />`)}
        ${BARS.map(([name, v], i) => {
          const cx = left + (i + 0.5) * step;
          const [fill, edge] = tint(i);
          return svg`
            <rect class="bar" x=${cx - 23} y=${y(v)} width="46" height=${bottom - y(v)} fill=${fill} stroke=${edge} />
            <text class="end" transform="translate(${cx + 5} 534) rotate(-31)">${name}</text>`;
        })}
        <text class="mid" transform="translate(46 261) rotate(-90)">Số lượng đơn vị</text>
        <text class="mid" x="604" y="642">Tỉnh/Thành phố</text>
      </svg>
    `;
  }
}

@customElement("pie-chart")
export class PieChart extends LitElement {
  static styles = [shared, css`
    .pie { display: block; width: 530px; max-width: 100%; margin: 0 auto 16px; }
    .slice { stroke: #fff; stroke-width: 4; stroke-linejoin: bevel; }
    .keys {
      display: flex;
      flex-wrap: wrap;
      justify-content: center;
      gap: 12px 15px;
      list-style: none;
      color: #666;
      font: 22px/28px "Liberation Sans", Arial, sans-serif;
    }
    .key { display: flex; align-items: center; gap: 8px; }
    .dot { width: 27px; height: 27px; }
  `];

  render() {
    const point = (deg: number) => {
      const a = (deg * Math.PI) / 180;
      return `${(265 + 264 * Math.sin(a)).toFixed(2)} ${(265 - 264 * Math.cos(a)).toFixed(2)}`;
    };
    return html`
      <svg class="pie" viewBox="0 0 530 530" role="img" aria-label="Phân bố số lượng đơn vị sáp nhập">
        ${SLICES.map(([, fill, end], i) => {
          const start = i ? SLICES[i - 1][2] : 0;
          return svg`<path class="slice" fill=${fill} d="M265 265L${point(start)}A264 264 0 ${end - start > 180 ? 1 : 0} 1 ${point(end)}Z" />`;
        })}
      </svg>
      <ul class="keys">
        ${SLICES.map(([name, fill]) => html`
          <li class="key"><svg class="dot" viewBox="0 0 27 27"><circle cx="13.5" cy="13.5" r="13.5" fill=${fill} /></svg>${name}</li>`)}
      </ul>
    `;
  }
}

@customElement("app-root")
export class AppRoot extends LitElement {
  static styles = [shared, css`
    :host {
      background: #f5f5f5;
      border-top: 2px solid #0b0418;
      min-height: 100vh;
      padding: 0 29px 35px 25px;
    }
    .page { display: flex; flex-direction: column; gap: 54px; }
    .head {
      background: #fff;
      padding: 56px 36px 54px;
      text-align: center;
      box-shadow: 0 4px 8px #0000001a;
    }
    h1 { font-size: 68px; line-height: 116px; font-weight: 700; color: #2f3d4f; }
    .lead { margin-top: 15px; font-size: 30px; line-height: 51px; color: #7f8c8d; }
    .stats { display: grid; grid-template-columns: repeat(4, 1fr); gap: 36px; }
    .card { background: #fff; border-radius: 18px; box-shadow: 0 4px 14px #0000001a; padding: 45px; }
    .stat { text-align: center; }
    .number { font-size: 70px; line-height: 118px; font-weight: 700; color: #2f3d4f; }
    .caption { margin-top: 6px; font-size: 26px; line-height: 42px; color: #7f8c8d; text-transform: uppercase; }
    .search { display: flex; align-items: center; gap: 27px; }
    .box {
      flex: 1;
      min-width: 0;
      height: 93px;
      padding: 0 36px;
      border: 3px solid #e0e0e0;
      border-radius: 47px;
      background: #fff;
      font: 28px Inter, sans-serif;
      color: #333;
    }
    .box::placeholder { color: #757575; opacity: 1; }
    .csv {
      display: flex;
      align-items: center;
      justify-content: center;
      gap: 14px;
      height: 75px;
      padding: 0 33px;
      border: 0;
      border-radius: 14px;
      background: #5096d8;
      box-shadow: 0 4px 10px #5096d84d;
      color: #fff;
      font: 500 25px Inter, sans-serif;
    }
    .csv svg { width: 22px; height: 25px; }
    .main { display: grid; grid-template-columns: 1fr 1fr; gap: 54px; }
    .side { display: flex; flex-direction: column; gap: 54px; min-width: 0; }
    h2 { font-size: 41px; line-height: 69px; font-weight: 700; color: #333; }
    h3 { font-size: 32px; line-height: 55px; font-weight: 700; color: #2f3d4f; }
    .bar-head { display: flex; align-items: center; justify-content: space-between; gap: 18px; margin-bottom: 27px; }
    .hint { display: flex; align-items: center; gap: 9px; font-size: 23px; font-style: italic; color: #7f8c8d; }
    .hint svg { width: 16px; height: 22px; }
    .pie-card { padding-bottom: 78px; }
    .pie-card h3 { margin-bottom: 18px; }
    .legend { margin-top: 36px; padding: 28px 27px 38px; border-radius: 14px; background: #f8f9fb; }
    .legend-title { font-size: 28px; line-height: 46px; font-weight: 700; color: #2f3d4f; margin-bottom: 18px; }
    .legend ul { list-style: none; display: grid; gap: 15px; font-size: 28px; line-height: 46px; }
    .legend li { display: flex; align-items: center; gap: 18px; }
    .swatch { width: 36px; height: 36px; border-radius: 7px; }
    .high { background: #7d1809; }
    .mid { background: #ed736e; }
    .low { background: #fbe6e4; }
  `];

  render() {
    return html`
      <div class="page">
        <header class="head">
          <h1>Bản đồ Đơn vị Hành chính Việt Nam 2025</h1>
          <p class="lead">Tra cứu 3.321 phường, xã trên cả nước sau sắp xếp</p>
        </header>
        <section class="stats">
          ${STATS.map(([n, label]) => html`
            <div class="card stat"><div class="number">${n}</div><div class="caption">${label}</div></div>`)}
        </section>
        <form class="search" @submit=${(e: Event) => e.preventDefault()}>
          <input class="box" type="text" aria-label="Tìm kiếm" placeholder="Tìm kiếm phường, xã, tỉnh..." />
          <button class="csv" type="button">
            <svg viewBox="0 0 22 25" fill="#fff"><path d="M7 0h8v14h6L11 25 1 14h6z" /></svg>CSV
          </button>
        </form>
        <main class="main">
          <section class="card">
            <h2>Bản đồ các tỉnh thành</h2>
            <province-map></province-map>
            <div class="legend">
              <h3 class="legend-title">Chú thích</h3>
              <ul>
                <li><span class="swatch high"></span>Nhiều thay đổi nhất</li>
                <li><span class="swatch mid"></span>Thay đổi trung bình</li>
                <li><span class="swatch low"></span>Ít thay đổi</li>
              </ul>
            </div>
          </section>
          <div class="side">
            <section class="card">
              <div class="bar-head">
                <h3>Top 15 tỉnh có nhiều thay đổi nhất</h3>
                <p class="hint">
                  <svg viewBox="0 0 16 22"><path d="M9 1c4 0 7 3 6 7-1 3-4 4-5 7l-5-2c0-3-2-4-2-7 0-3 3-5 6-5z" fill="#fbe9a6" stroke="#f0dc98" /><circle cx="10" cy="6" r="3" fill="#fffbe6" /><path d="M4 14l5 2-2 5-4-1z" fill="#a9aaa8" /></svg>
                  Nhấp vào cột để xem chi tiết
                </p>
              </div>
              <bar-chart></bar-chart>
            </section>
            <section class="card pie-card">
              <h3>Phân bố số lượng đơn vị sáp nhập</h3>
              <pie-chart></pie-chart>
            </section>
          </div>
        </main>
      </div>
    `;
  }
}
